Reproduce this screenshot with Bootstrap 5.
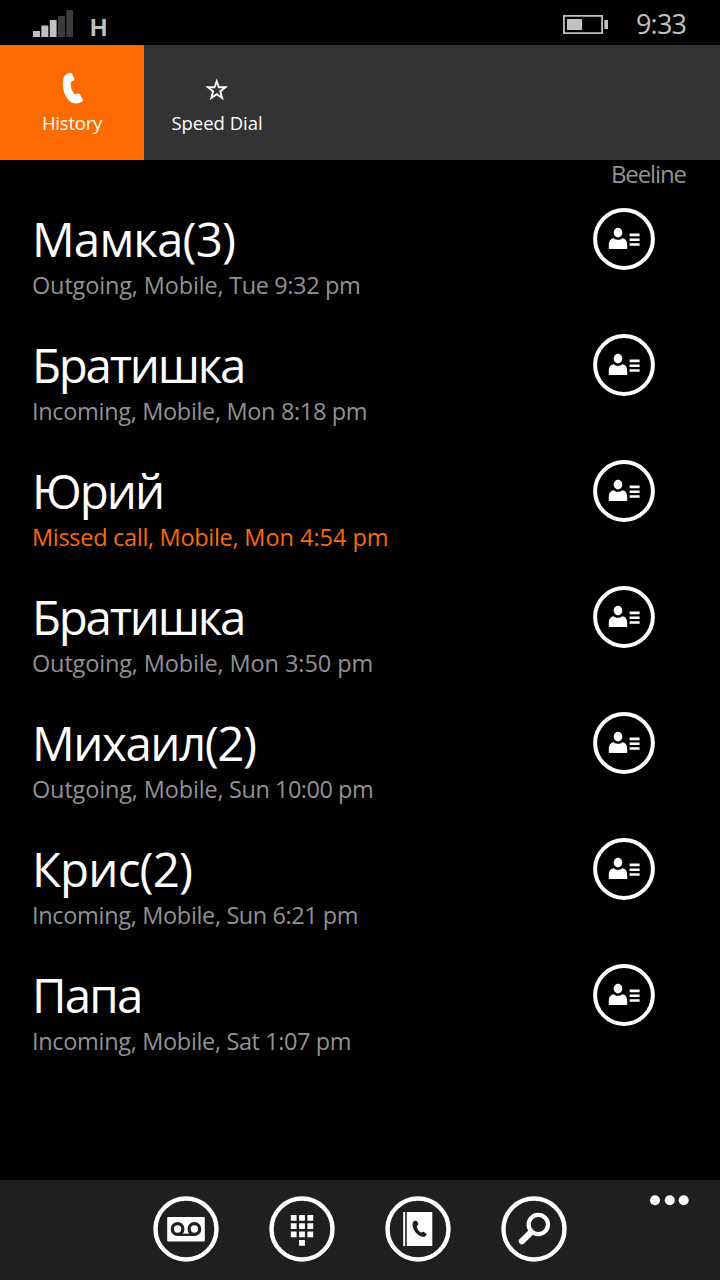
<!DOCTYPE html>
<html lang="en">
<head>
<meta charset="utf-8">
<meta name="viewport" content="width=device-width, initial-scale=1">
<title>Phone history</title>
<link href="https://cdn.jsdelivr.net/npm/bootstrap@5.3.0/dist/css/bootstrap.min.css" rel="stylesheet">
<style>
  body { background: #000; color: #fff; font-family: "Open Sans", "Noto Sans", sans-serif; }
  .phone { width: 720px; height: 1280px; background: #000; }
  .phone svg { display: block; flex: none; }
  .phone span, .phone div { white-space: pre; }
  .status { height: 45px; padding: 10px 34px 0 33px; color: #c0c0c0; }
  .net { font: 700 24px/35px "Liberation Sans", Arial, sans-serif; margin-left: 17px; color: #c0c0c0; }
  .battery { margin-top: 5px; margin-right: 27px; }
  .clock { font-size: 27px; line-height: 28px; width: 50px; }
  .tabs { height: 115px; background: #333; }
  .tab-item { width: 144px; height: 115px; color: #fff; text-decoration: none; font-size: 18.5px; line-height: 24px; }
  .tab-item.active { background: #fc6a00; }
  .tab-item svg { margin-top: 25px; margin-bottom: 5px; }
  .tab-item:not(.active) span { margin-left: 2px; }
  .carrier { height: 48px; padding-right: 32px; font-size: 24px; line-height: 28px; color: #929292; }
  .carrier span { width: 77px; }
  .call { height: 126px; padding: 0 65px 0 32px; }
  .who { font-size: 47.5px; line-height: 50px; margin-top: 6px; }
  .info { font-size: 23.5px; line-height: 30px; margin-top: 6px; color: #929292; }
  .missed { color: #fc6a00; }
  .appbar { height: 100px; background: #1f1f1f; padding: 16px 31px 0 153px; }
  .appbar .actions { gap: 50px; }
  .more { margin-top: -2px; }
</style>
</head>
<body>
<svg width="0" height="0" class="position-absolute">
  <symbol id="contact" viewBox="0 0 62 62">
    <circle cx="31" cy="31" r="28.900" fill="none" stroke="#fff" stroke-width="4"/>
    <ellipse cx="25" cy="24.600" rx="4.300" ry="4.900" fill="#fff"/>
    <path fill="#fff" d="M15.800 41v-3.500c0-4 1.200-6.700 5-7.300 1.200 1 2.600 1.500 4.200 1.500s3-.5 4.200-1.500c3.800.6 5 3.300 5 7.300V41z"/>
    <path stroke="#fff" stroke-width="2.600" d="M36.600 26.900h10M36.600 31.700h10M36.600 36.500h10"/>
  </symbol>
</svg>
<main class="phone d-flex flex-column overflow-hidden">
  <header class="status d-flex align-items-start">
    <svg width="40" height="27" viewBox="0 0 40 27"><path fill="#c0c0c0" d="M0 21h7v6H0zM8.300 15.500h7V27h-7zM16.800 10h6.800v17h-6.800z"/><path fill="#3b3b3b" d="M25 6h7v21h-7zM33.300 0H40v27h-6.700z"/></svg>
    <span class="net">H</span>
    <svg class="battery ms-auto" width="46" height="20" viewBox="0 0 46 20"><path fill="none" stroke="#c0c0c0" stroke-width="1.800" d="M.9.900h38.200v17.200H.9z"/><path fill="#c0c0c0" d="M4 4h15v11H4zM41.300 5H45v9h-3.700z"/></svg>
    <span class="clock" data-end="49.500">9:33</span>
  </header>
  <nav class="tabs d-flex">
    <a href="#" class="tab-item active d-flex flex-column align-items-center">
      <svg width="32" height="36" viewBox="0 0 32 36"><path fill="#fff" d="M13.500 3c1-.5 2-.4 2.500.5l2.300 5c.4 1-.1 1.800-1 2.200l-2.400 1.200c-.6 4 .9 9.500 4.100 12.600l3-.9c1-.3 1.700 0 2.100.8l2.500 4.900c.5 1 .1 2-.8 2.500-4.700 2.800-9.800 2.500-13.500-2C7.500 24 6 16.500 7.200 9.500 7.800 5.500 10.500 3.500 13.500 3z"/></svg>
      <span data-end="61">History</span>
    </a>
    <a href="#" class="tab-item d-flex flex-column align-items-center">
      <svg width="32" height="36" viewBox="0 0 32 36"><path fill="none" stroke="#fff" stroke-width="1.900" d="M16.700 11.300l2.200 6h6.500l-5.100 4.100 1.800 6.600-5.400-3.800-5.400 3.800 1.800-6.600L8 17.300h6.500z"/></svg>
      <span data-end="90.500">Speed Dial</span>
    </a>
  </nav>
  <div class="carrier d-flex justify-content-end"><span data-end="75.500">Beeline</span></div>
  <section id="calls" class="flex-grow-1"></section>
  <footer class="appbar d-flex align-items-start">
    <div class="actions d-flex">
      <svg width="66" height="66" viewBox="0 0 66 66"><circle cx="33" cy="33" r="30.500" fill="none" stroke="#fff" stroke-width="4.400"/><rect x="14.200" y="21" width="37.600" height="24.500" rx="1" fill="#fff"/><g fill="none" stroke="#1f1f1f" stroke-width="3.200"><circle cx="24.600" cy="33" r="5.300"/><circle cx="41.400" cy="33" r="5.300"/><path stroke-width="2.300" d="M24.600 38.800h16.800"/></g></svg>
      <svg width="66" height="66" viewBox="0 0 66 66"><circle cx="33" cy="33" r="30.500" fill="none" stroke="#fff" stroke-width="4.400"/><path fill="#fff" d="M21.800 19h5.800v5.800h-5.800zM30.100 19h5.800v5.800h-5.800zM38.400 19h5.800v5.800h-5.800zM21.800 27.200h5.800V33h-5.800zM30.100 27.200h5.800V33h-5.800zM38.400 27.200h5.800V33h-5.800zM21.800 35.500h5.800v5.800h-5.800zM30.100 35.500h5.800v5.800h-5.800zM38.400 35.500h5.800v5.800h-5.800zM30.100 43.900h5.800v5.800h-5.800z"/></svg>
      <svg width="66" height="66" viewBox="0 0 66 66"><circle cx="33" cy="33" r="30.500" fill="none" stroke="#fff" stroke-width="4.400"/><path fill="#fff" d="M18.200 16h2v34h-2zM21.800 16h25.500v34H21.800z"/><path fill="#1f1f1f" d="M29.700 24.800c1.300-.4 2.200-.1 2.600.8l.9 2c.4 1-.1 1.700-1.400 2.500.2 2.800 1.800 5.300 4.400 6.600 1-.9 1.800-1.200 2.700-.6l1.800 1.200c1 .7 1 1.500.2 2.500-1.300 1.500-3.700 1.300-5.700.3-3.700-1.900-6.700-5.600-7.500-9.800-.5-2.600.2-4.900 2-5.500z"/></svg>
      <svg width="66" height="66" viewBox="0 0 66 66"><circle cx="33" cy="33" r="30.500" fill="none" stroke="#fff" stroke-width="4.400"/><circle cx="37.300" cy="28.500" r="9.700" fill="none" stroke="#fff" stroke-width="4.200"/><path stroke="#fff" stroke-width="6.200" stroke-linecap="round" d="M29.500 36.700l-8.600 8.600"/></svg>
    </div>
    <svg class="more ms-auto" width="40" height="12" viewBox="0 0 40 12"><g fill="#fff"><circle cx="6" cy="6.300" r="5"/><circle cx="20.800" cy="6.300" r="5"/><circle cx="34.700" cy="6.300" r="5"/></g></svg>
  </footer>
</main>
<script src="https://cdn.jsdelivr.net/npm/bootstrap@5.3.0/dist/js/bootstrap.bundle.min.js"></script>
<script>
  // name, name width, call type, type width, time, width of the whole line
  const calls = [
    ['Мамка(3)', 203, 'Outgoing, Mobile,', 190.5, ' Tue 9:32 pm', 326],
    ['Братишка', 211, 'Incoming, Mobile,', 188, ' Mon 8:18 pm', 333],
    ['Юрий', 130, 'Missed call, Mobile,', 205.5, ' Mon 4:54 pm', 354],
    ['Братишка', 211, 'Outgoing, Mobile,', 190.5, ' Mon 3:50 pm', 338.5],
    ['Михаил(2)', 224, 'Outgoing, Mobile,', 190.5, ' Sun 10:00 pm', 339],
    ['Крис(2)', 160, 'Incoming, Mobile,', 188, ' Sun 6:21 pm', 324],
    ['Папа', 108, 'Incoming, Mobile,', 188, ' Sat 1:07 pm', 317]
  ];
  document.getElementById('calls').innerHTML = calls.map(([who, ww, type, tw, time, end]) => `
    <article class="call d-flex justify-content-between align-items-start">
      <div class="d-flex flex-column">
        <div class="who"><span data-end="${ww}">${who}</span></div>
        <div class="info ${type.startsWith('Missed') ? 'missed' : ''}"><span data-end="${tw}">${type}</span><span data-end="${end - tw}">${time}</span></div>
      </div>
      <svg width="62" height="62"><use href="#contact"/></svg>
    </article>`).join('');
  // Track each label so that its last glyph ends at the given width
  const ctx = document.createElement('canvas').getContext('2d');
  document.querySelectorAll('[data-end]').forEach(el => {
    const cs = getComputedStyle(el), text = el.textContent;
    ctx.font = `${cs.fontWeight} ${cs.fontSize} ${cs.fontFamily}`;
    const width = ctx.measureText(text).actualBoundingBoxRight;
    el.style.letterSpacing = (el.dataset.end - width) / (text.length - 1) + 'px';
  });
</script>
</body>
</html>
